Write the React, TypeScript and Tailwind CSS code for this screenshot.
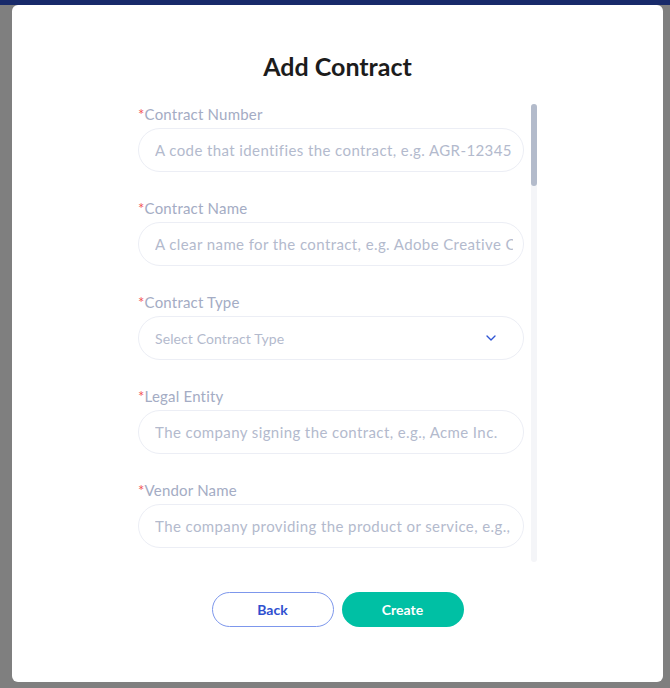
import { ChevronDown } from 'lucide-react';

const fields = [
  { label: 'Contract Number', placeholder: 'A code that identifies the contract, e.g. AGR-12345' },
  { label: 'Contract Name', placeholder: 'A clear name for the contract, e.g. Adobe Creative Cloud License' },
  { label: 'Contract Type', placeholder: 'Select Contract Type', select: true },
  { label: 'Legal Entity', placeholder: 'The company signing the contract, e.g., Acme Inc.' },
  { label: 'Vendor Name', placeholder: 'The company providing the product or service, e.g., Adobe' },
  { label: 'Contract Owner', placeholder: 'The person responsible for the contract' },
  { label: 'Department', placeholder: 'Select Department', select: true },
  { label: 'Start Date', placeholder: 'MM/DD/YYYY' },
  { label: 'End Date', placeholder: 'MM/DD/YYYY' },
  { label: 'Contract Value', placeholder: 'The total value of the contract, e.g. 12000' },
  { label: 'Currency', placeholder: 'Select Currency', select: true },
  { label: 'Payment Terms', placeholder: 'Select Payment Terms', select: true },
];

export default function App() {
  return (
    <div
      className="w-[670px] h-[688px] bg-[#7f7f7f] relative overflow-hidden"
      style={{ fontFamily: 'Lato, "Open Sans", sans-serif' }}
    >
      <div className="h-[5px] bg-[#182a6a]" />
      <div className="absolute left-[12px] top-[5px] w-[651px] h-[677px] bg-white rounded-[6px] flex flex-col items-center pt-[45px]">
        <h1 className="text-[25px] leading-[32px] font-bold text-[#1c1c1c]">Add Contract</h1>
        <div className="mt-[22px] h-[458px] flex gap-[7px]">
          <div className="w-[386px] h-full overflow-hidden">
            <div className="flex flex-col gap-[26px]">
              {fields.map(f => (
                <div key={f.label} className="flex flex-col gap-[4px]">
                  <label className="text-[15px] leading-[20px] text-[#a4acc4] tracking-[0.2px]">
                    <span className="text-[#f25454]">*</span>{f.label}
                  </label>
                  <div className={`h-[44px] rounded-full border border-[#eceef5] flex items-center pl-[16px] overflow-hidden ${f.select ? 'pr-[24px]' : 'pr-[10px]'}`}>
                    <span className={`flex-1 whitespace-nowrap overflow-hidden ${f.select ? 'text-[14px] tracking-[0.1px]' : 'text-[15px] tracking-[0.4px]'} text-[#b3bacd]`}>
                      {f.placeholder}
                    </span>
                    {f.select && <ChevronDown size={16} strokeWidth={2} className="text-[#2f55d4] shrink-0" />}
                  </div>
                </div>
              ))}
            </div>
          </div>
          <div className="w-[6px] h-full rounded-full bg-[#f4f5f8] flex flex-col">
            <div className="h-[82px] rounded-full bg-[#b3bbcb]" />
          </div>
        </div>
        <div className="mt-[30px] flex gap-[8px]">
          <button className="w-[122px] h-[35px] rounded-full border border-[#7d97ec] text-[#2f4fcf] text-[14px] font-bold">
            Back
          </button>
          <button className="w-[122px] h-[35px] rounded-full bg-[#00c0a4] text-white text-[14px] font-bold">
            Create
          </button>
        </div>
      </div>
    </div>
  );
}
